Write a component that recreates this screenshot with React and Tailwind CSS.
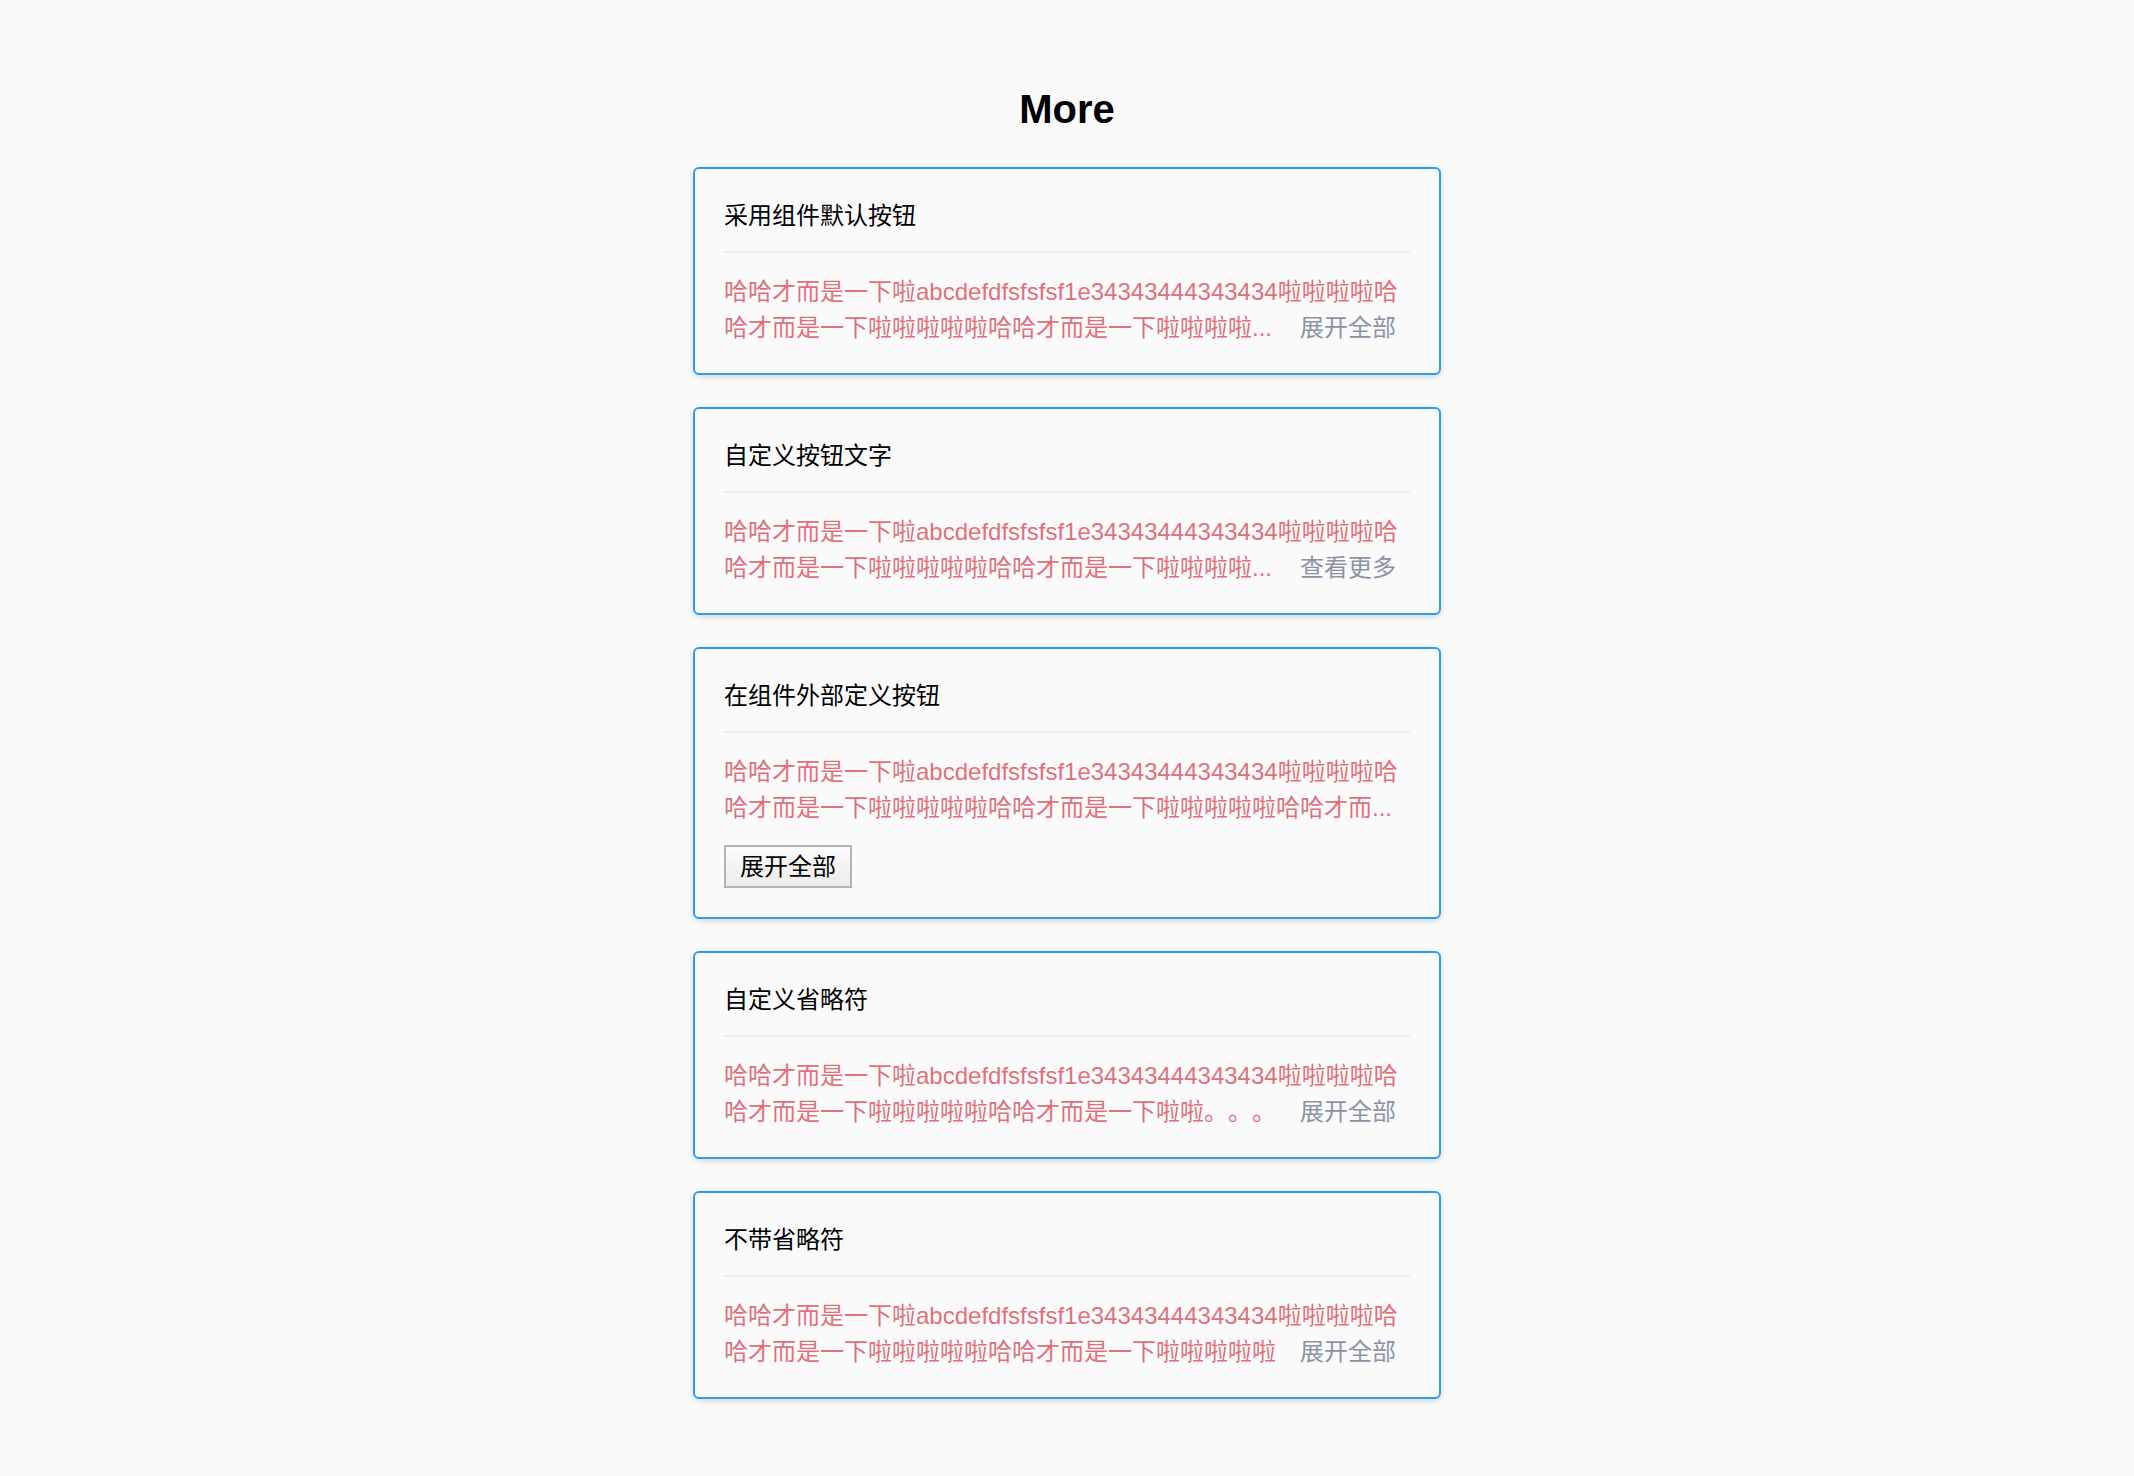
import React from "react";

const FIRST_LINE = "哈哈才而是一下啦abcdefdfsfsfsf1e34343444343434啦啦啦啦哈";

const demos = [
  { title: "采用组件默认按钮", rest: "哈才而是一下啦啦啦啦啦哈哈才而是一下啦啦啦啦...", action: "展开全部" },
  { title: "自定义按钮文字", rest: "哈才而是一下啦啦啦啦啦哈哈才而是一下啦啦啦啦...", action: "查看更多" },
  { title: "在组件外部定义按钮", rest: "哈才而是一下啦啦啦啦啦哈哈才而是一下啦啦啦啦啦哈哈才而...", outside: true },
  { title: "自定义省略符", rest: "哈才而是一下啦啦啦啦啦哈哈才而是一下啦啦。。。", action: "展开全部" },
  { title: "不带省略符", rest: "哈才而是一下啦啦啦啦啦哈哈才而是一下啦啦啦啦啦", action: "展开全部" },
];

const Card = ({ demo }) => (
  <div
    className={`rounded-[6px] border-2 border-[#2a9ef5] bg-[#fafafa] px-[29px] pt-[29px] shadow-[0_2px_6px_rgba(0,0,0,0.14)] ${
      demo.outside ? "pb-[29px]" : "pb-[27px]"
    }`}
  >
    <div className="border-b-2 border-[#efefef] pb-[17px] text-[24px] leading-[36px] text-black">
      {demo.title}
    </div>
    <div className="mt-[21px] text-[24px] leading-[36px] text-[#e2707a] [text-spacing-trim:space-all]">
      <div className="whitespace-nowrap">{FIRST_LINE}</div>
      <div className="flex whitespace-nowrap">
        <span>{demo.rest}</span>
        {demo.action && (
          <span className="ml-auto mr-[14px] cursor-pointer text-[#8a94a8]">{demo.action}</span>
        )}
      </div>
    </div>
    {demo.outside && (
      <button className="mt-[19px] h-[43px] whitespace-nowrap border-2 border-[#b3b3b3] bg-gradient-to-b from-[#fbfbfb] to-[#ebebeb] px-[14px] text-[24px] leading-[36px] text-black">
        展开全部
      </button>
    )}
  </div>
);

export default function App() {
  return (
    <div
      className="min-h-screen bg-[#fafafa] pt-[85px] pb-[77px]"
      style={{ fontFamily: '"Liberation Sans", "Noto Sans CJK SC", sans-serif' }}
    >
      <h1 className="mb-[34px] text-center text-[40px] font-bold leading-[48px] text-black">More</h1>
      <div className="mx-auto flex w-[748px] flex-col gap-[32px]">
        {demos.map((d) => (
          <Card key={d.title} demo={d} />
        ))}
      </div>
    </div>
  );
}
